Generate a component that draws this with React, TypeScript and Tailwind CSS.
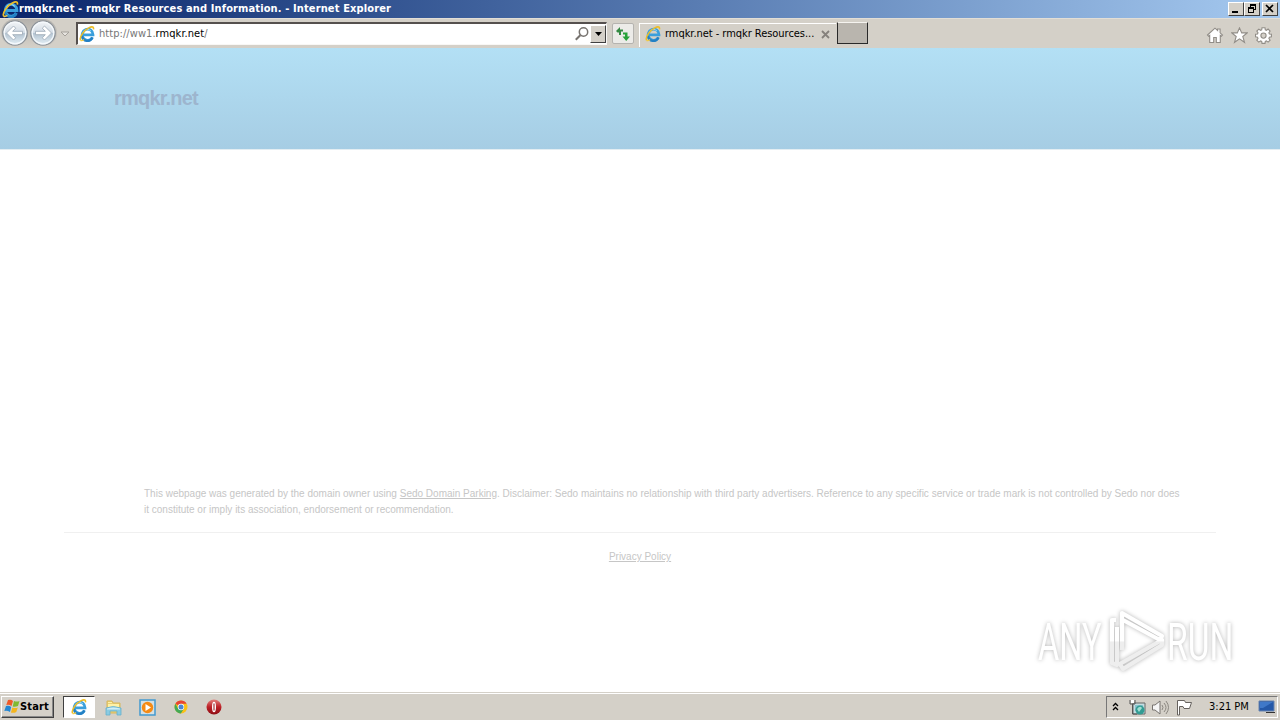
import React from "react";

const ui = "font-['DejaVu_Sans_Condensed','DejaVu_Sans',sans-serif] [font-stretch:condensed]";

function IEIcon({ size = 16 }: { size?: number }) {
  return (
    <svg width={size} height={size} viewBox="0 0 16 16" className="shrink-0" fill="none">
      <path d="M13.4 11.3A5.4 5.6 0 1 1 14 8.9H4.6" stroke="#3a9fdc" strokeWidth="2.8" />
      <path d="M13.4 11.3A5.4 5.6 0 0 1 3 10" stroke="#2380c4" strokeWidth="2.2" />
      <path d="M12 5.2A4.7 4.9 0 0 0 4 6.4" stroke="#9adcf8" strokeWidth="1" />
      <path d="M1.6 14.2C0 11.5 4.8 4.2 10.2 1.6c3.2-1.5 4.8-.6 4.2 1.8" stroke="#edbd27" strokeWidth="1.6" />
      <path d="M1.5 14.2c.8.7 2.2.3 3.6-.6" stroke="#f2cb45" strokeWidth="1.4" />
    </svg>
  );
}

function NavButton({ forward = false }: { forward?: boolean }) {
  return (
    <svg width="28" height="28" viewBox="0 0 28 28" className="shrink-0">
      <defs>
        <linearGradient id={forward ? "nf" : "nb"} x1="0" y1="0" x2="0" y2="1">
          <stop stopColor="#f4f6f8" /><stop offset=".48" stopColor="#d3dce5" />
          <stop offset=".52" stopColor="#b4c4d2" /><stop offset="1" stopColor="#e6f1f7" />
        </linearGradient>
      </defs>
      <circle cx="14" cy="14" r="12.2" fill={forward ? "url(#nf)" : "url(#nb)"} stroke="#8d9399" strokeWidth="1.3" />
      <circle cx="14" cy="14" r="10.8" fill="none" stroke="#f5f9fc" strokeWidth="1.2" />
      <path
        transform={forward ? "rotate(180 14 14)" : undefined}
        d="m5.5 14 7-7 2.2 2.2-3 3.1h9.8v3.4h-9.8l3 3.1-2.2 2.2z"
        fill="#fff" stroke="#a3afbb" strokeWidth=".9"
      />
    </svg>
  );
}

function CaptionButton({ children }: { children: React.ReactNode }) {
  return (
    <div className="flex h-[14px] w-4 items-center justify-center border border-t-white border-r-[#404040] border-b-[#404040] border-l-white bg-[#d4d0c8]">
      <svg width="14" height="12" viewBox="0 0 14 12" fill="none" stroke="#000" shapeRendering="crispEdges">{children}</svg>
    </div>
  );
}

function TitleBar() {
  return (
    <div className={`flex h-[18px] items-center bg-linear-to-r from-[#0a246a] to-[#a6caf0] pr-[2px] pl-[2px] ${ui}`}>
      <IEIcon size={17} />
      <span className="w-[1000px] whitespace-nowrap text-[11px] leading-[18px] font-bold tracking-[0.125px] text-white">
        rmqkr.net - rmqkr Resources and Information. - Internet Explorer
      </span>
      <div className="ml-auto flex">
        <CaptionButton><path d="M3 9h6" strokeWidth="2" /></CaptionButton>
        <CaptionButton><path d="M5 1.5h6M5 2.5h6M5.5 2v2M10.5 2v5M9 6.5h2M3 4.5h6M3 5.5h6M3.5 5v5M8.5 5v5M3 9.5h6" /></CaptionButton>
        <div className="ml-[2px]">
          <CaptionButton><path d="m3 2 7 7M10 2 3 9" strokeWidth="1.7" shapeRendering="auto" /></CaptionButton>
        </div>
      </div>
    </div>
  );
}

function Toolbar() {
  return (
    <div className={`flex h-[30px] border-t border-[#e2ded6] bg-[#d4d0c8] ${ui}`}>
      <div className="flex w-[76px] pl-[1px]">
        <div className="flex h-[28px] rounded-full bg-linear-to-b from-[#b5b2ad] to-[#d4d0c8]">
          <NavButton /><NavButton forward />
        </div>
        <svg width="12" height="28" viewBox="0 0 12 28" className="ml-[2px]"><path d="M2 13h8l-4 4z" fill="#e7e4df" stroke="#a5a19b" /></svg>
      </div>
      <div className="mt-[3px] flex h-[23px] w-[531px] items-center border border-t-2 border-l-2 border-t-[#55504e] border-r-[#f8f7f5] border-b-[#f8f7f5] border-l-[#55504e] bg-white pl-[1px]">
        <IEIcon />
        <span className="ml-1 whitespace-nowrap text-[11px] leading-4 tracking-[0.06px] text-[#777]">
          http://ww1.<span className="text-black">rmqkr.net</span>/
        </span>
        <svg width="16" height="16" viewBox="0 0 16 16" className="ml-auto" fill="none" stroke="#77736f">
          <circle cx="9.5" cy="6" r="4.2" strokeWidth="1.5" /><path d="m6.3 9.2-4.5 4.5" strokeWidth="2" />
        </svg>
        <div className="flex h-[18px] w-4 items-center justify-center border border-t-white border-r-[#404040] border-b-[#404040] border-l-white bg-[#d4d0c8]">
          <svg width="7" height="4"><path d="M0 0h7L3.5 4z" /></svg>
        </div>
      </div>
      <div className="mt-[4px] ml-[5px] flex h-[21px] w-[22px] items-center justify-center rounded-[2px] border border-[#b5b3af] bg-[#ecebe8]">
        <svg width="16" height="16" viewBox="0 0 16 16">
          <path d="M.5 6H3V4.5L5.5 1.5v2H8v2H6V6h1L3.8 9.3z" fill="none" />
          <path d="M1 5 5 1v2.5h3v2H6V9H4V6.5H2.5z" fill="#358a43" />
          <path d="M15 10.5 11.2 15 7.5 10.5H10v-2H8v-2h4.5v4z" fill="#27a339" />
        </svg>
      </div>
      <div className="mt-[4px] ml-[5px] flex h-[24px] w-[197px] items-center border-t border-l border-white pb-[3px] pl-[5px]">
        <IEIcon />
        <span className="ml-[4px] w-[156px] whitespace-nowrap text-[11px] leading-4 tracking-[-0.04px] text-black">rmqkr.net - rmqkr Resources...</span>
        <svg width="9" height="9" viewBox="0 0 9 9"><path d="m1 1 7 7M8 1 1 8" stroke="#85817c" strokeWidth="1.8" /></svg>
      </div>
      <div className="mt-[3px] ml-[1px] h-[22px] w-[31px] border border-t-[#f5f3ef] border-r-[#292929] border-b-[#292929] border-l-[#292929] bg-[#b9b5ae]" />
      <div className="mt-[8px] mr-[8px] ml-auto flex gap-[7px]">
        <svg width="18" height="17" viewBox="0 0 18 17" fill="#fff" stroke="#918d87" strokeWidth="1.1"><path d="M1.5 8 9 1.2l2.6 2.3V2h2.5v3.8L16.5 8l-1.2 1.2-1-.8V15.5h-4v-5H7.7v5h-4V8.4l-1 .8z" /></svg>
        <svg width="17" height="17" viewBox="0 0 17 17" fill="#fff" stroke="#918d87" strokeWidth="1.1"><path d="m8.5.9 2.2 5h5.5l-4.4 3.6 1.7 5.8-5-3.5-5 3.5 1.7-5.8L.8 5.9h5.5z" /></svg>
        <svg width="17" height="17" viewBox="0 0 17 17" fill="#fff" stroke="#918d87" strokeWidth="1.1"><path d="M7 .8h3l.3 2 1.2.5 1.6-1.2 2 2-1.2 1.7.5 1.2 2 .3v2.6l-2 .4-.5 1.2 1.2 1.6-2 2-1.6-1.2-1.2.5-.3 2H7l-.3-2-1.2-.5-1.7 1.2-2-2L3 11.5l-.5-1.2-2-.4V7.3l2-.3L3 5.8 1.8 4.1l2-2 1.7 1.2 1.2-.5z" /><circle cx="8.5" cy="8.6" r="2.6" fill="#d4d0c8" /></svg>
      </div>
    </div>
  );
}

function Watermark() {
  return (
    <div className="absolute top-[556px] left-[1030px] h-[84px] w-[245px]">
      <svg width="245" height="84" viewBox="0 0 245 84" fill="none" className="overflow-visible drop-shadow-[0_0_2px_#b4b4b4]">
        <defs>
          <linearGradient id="wm" x1="0" y1="0" x2="0" y2="72" gradientUnits="userSpaceOnUse">
            <stop stopColor="#fff" /><stop offset=".51" stopColor="#fff" /><stop offset=".53" stopColor="#eee" /><stop offset="1" stopColor="#eee" />
          </linearGradient>
        </defs>
        <g fill="url(#wm)" className="font-[Roboto,sans-serif] text-[52px] font-normal">
          <text transform="translate(8 56) scale(.625 1)">ANY</text>
          <text transform="translate(137 56) scale(.645 1)">RUN</text>
        </g>
        <g stroke="url(#wm)" strokeWidth="4.2" strokeLinejoin="round">
          <path d="M92 46V9l40 23-2 4-37-20" />
          <path d="M86 16h-4v43l5 2V23" />
          <path d="m88 61 44-25v5L93 65l-3-5" />
        </g>
      </svg>
    </div>
  );
}

function WebPage() {
  return (
    <main className="relative h-[644px] bg-white font-['Liberation_Sans',sans-serif]">
      <header className="h-[102px] border-b border-[#e3edf2] bg-linear-to-b from-[#b3e0f5] to-[#a6cde4] pt-[38px] pl-[114px]">
        <h1 className="text-[20px] leading-6 font-bold tracking-[-0.8px] text-[#9db5ce]">rmqkr.net</h1>
      </header>
      <footer className="mx-16 pt-[336px] text-[10px] leading-4 text-[#c6c6c6]">
        <p className="h-[46px] px-20 whitespace-nowrap">
          This webpage was generated by the domain owner using <a className="underline">Sedo Domain Parking</a>. Disclaimer: Sedo maintains no relationship with third party advertisers. Reference to any specific service or trade mark is not controlled by Sedo nor does<br />
          it constitute or imply its association, endorsement or recommendation.
        </p>
        <div className="border-t border-[#f0f0f0] pt-4 text-center"><a className="underline">Privacy Policy</a></div>
      </footer>
      <Watermark />
    </main>
  );
}

function Taskbar() {
  return (
    <div className={`flex h-7 items-start border-t border-[#d4d0c8] bg-[#d4d0c8] pt-[3px] shadow-[inset_0_1px_#fff] ${ui}`}>
      <div className="ml-[1px] flex h-[22px] w-[53px] items-center border border-t-white border-r-[#404040] border-b-[#404040] border-l-white pl-[2px] shadow-[inset_-1px_-1px_#888]">
        <svg width="16" height="16" viewBox="0 0 16 16" className="shrink-0">
          <path d="M4 1q3-1 5 1L7.5 7Q5 5 2.3 6z" fill="#f05a28" />
          <path d="M10 2q3 1 5.5 0L14 7q-3 1-5.3.4z" fill="#80b932" />
          <path d="M2 7q3-1 5.2 1L6 13Q3 11 .3 12z" fill="#2487d3" />
          <path d="M8.4 8.5q3 1 5.4 0L12.3 13q-3 1.5-5.4.4z" fill="#f4b51d" />
        </svg>
        <span className="text-[11px] leading-4 font-bold tracking-[0.15px] text-black">Start</span>
      </div>
      <div className="ml-[9px] flex h-[22px] w-8 items-center justify-center border border-t-[#404040] border-r-white border-b-white border-l-[#404040] bg-white"><IEIcon size={16} /></div>
      <div className="ml-[10px] flex h-[22px] items-center gap-[17px]">
        <svg width="17" height="17" viewBox="0 0 17 17">
          <path d="M2 2h5l1 2h7v10H2z" fill="#e9cf75" stroke="#d8b75a" /><path d="M3 3h4v1H3zM8 5h6v3H3V5z" fill="#fff1a6" />
          <path d="M1 9q7-3 15 0v7h-4v-4H5v4H1z" fill="#8acbe2" stroke="#66b0cd" strokeWidth=".8" /><path d="M2 9.5q6-2 13 0v1H2z" fill="#cfeef7" />
        </svg>
        <svg width="17" height="17" viewBox="0 0 17 17"><path d="M1 1h15v15H1z" fill="#d5e0e3" stroke="#4299d0" strokeWidth="1.5" /><circle cx="8.5" cy="8.5" r="5.7" fill="#f58b15" /><path d="m6.5 5 5.5 3.5L6.5 12z" fill="#fff" /></svg>
        <svg width="16" height="16" viewBox="0 0 16 16"><circle cx="8" cy="8" r="6.5" fill="#fbc116" /><path d="M8 8 2.4 4.7A6.5 6.5 0 0 1 13.6 4.7H8z" fill="#e74435" /><path d="M8 8 5 9.6 2.4 4.7A6.5 6.5 0 0 0 7.8 14.5L11 9.5z" fill="#44a956" /><circle cx="8" cy="8" r="3.2" fill="#fff" /><circle cx="8" cy="8" r="2.5" fill="#4b86d3" /></svg>
        <svg width="16" height="16" viewBox="0 0 16 16"><defs><linearGradient id="or" x2="0" y2="1"><stop stopColor="#e3807c" /><stop offset=".5" stopColor="#bc2027" /><stop offset="1" stopColor="#8e0d14" /></linearGradient></defs><circle cx="8" cy="8" r="7.5" fill="url(#or)" /><ellipse cx="8" cy="8" rx="2" ry="5.3" fill="#fff" /><path d="M8 4.5v7" stroke="#9c2026" strokeWidth="1.1" /></svg>
      </div>
      <div className="mr-[2px] ml-auto flex h-[22px] w-[172px] items-center border border-t-[#777] border-r-white border-b-white border-l-[#777] pl-[5px] text-[11px] text-black">
        <svg width="7" height="10" viewBox="0 0 7 10" fill="none" stroke="#000" strokeWidth="1.3"><path d="m1 4 2.5-2.5L6 4M1 8l2.5-2.5L6 8" /></svg>
        <svg width="18" height="17" viewBox="0 0 18 17" fill="none" className="ml-[9px]"><path d="M5 4h12v11H5z" fill="#c4dde0" stroke="#666" /><path d="M7 6h8v6H7z" fill="#8ac3cf" /><path d="M2 1v4h5V1M4.5 5v10H9" stroke="#555" /><path d="M3 1h3v3H3z" fill="#fff" /><circle cx="12" cy="11" r="4.5" fill="#339c93" /><path d="M9 10q3-4 5-1l-3 4z" fill="#a1ded2" /></svg>
        <svg width="18" height="17" viewBox="0 0 18 17" fill="none" className="ml-[5px]"><path d="M1.5 6H4l5-4v13l-5-4H1.5z" fill="#f5f5f5" stroke="#77736f" /><path d="M11 6q2 2.5 0 5M13 4q4 4.5 0 9M15 2q5 6.5 0 13" stroke="#8b8780" /></svg>
        <svg width="18" height="17" viewBox="0 0 18 17" className="ml-[6px]" fill="#fff" stroke="#66625e"><path d="M2.5 16V1.5h7l1 2h6l-2 6H9l-1-2H4.5V16z" strokeWidth="1" /></svg>
        <span className="ml-[16px] whitespace-nowrap">3:21 PM</span>
        <svg width="18" height="16" viewBox="0 0 18 16" className="mr-[1px] ml-auto"><path d="M1 2h15v10H1z" fill="#2458a8" stroke="#6884ae" /><path d="M2 3h13L5 9H2z" fill="#3f78c8" /><path d="M8 13h9v1H8z" fill="#333" /></svg>
      </div>
    </div>
  );
}

export default function App() {
  return (
    <div className="h-[720px] w-[1280px] overflow-hidden bg-white">
      <TitleBar />
      <Toolbar />
      <WebPage />
      <Taskbar />
    </div>
  );
}
